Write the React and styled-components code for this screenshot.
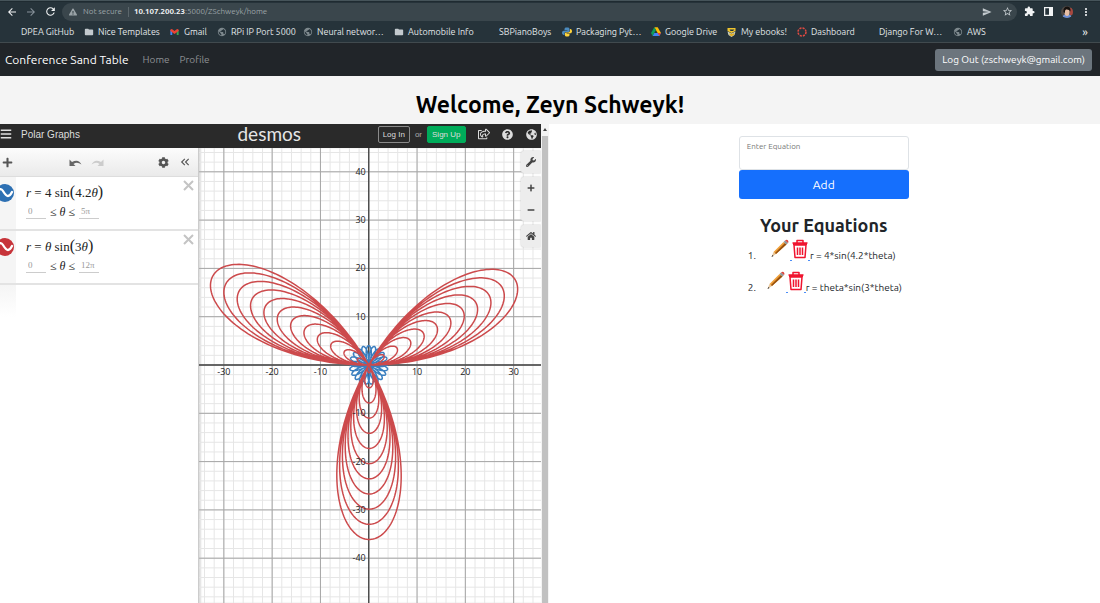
import React from "react";
import styled, { createGlobalStyle } from "styled-components";
import {
  FaPlus, FaMinus, FaCog, FaWrench, FaHome, FaQuestionCircle, FaBars, FaExclamationTriangle,
  FaRegShareSquare, FaGlobeAmericas,
} from "react-icons/fa";
import {
  MdArrowBack, MdArrowForward, MdRefresh, MdSend, MdStarBorder, MdExtension, MdFolder,
  MdMoreVert, MdPublic, MdKeyboardDoubleArrowLeft,
} from "react-icons/md";

const UI = `Ubuntu, "Noto Sans", "Open Sans", sans-serif`;
const HEADING = `Ubuntu, "Open Sans", "Noto Sans", sans-serif`;
const DESMOS = `"Liberation Sans", Arial, sans-serif`;
const MATH = `"Liberation Serif", "Times New Roman", serif`;

const Global = createGlobalStyle`
  * { box-sizing: border-box; }
  body { margin: 0; font-family: ${UI}; background: #fff; color: #212529; }
  button, input { font: inherit; margin: 0; }
  h1, h2, ol, form { margin: 0; padding: 0; }
`;

const Page = styled.div`
  display: flex;
  flex-direction: column;
  min-height: 100vh;
`;

/* Browser chrome */
const Chrome = styled.header`
  background: #26333a;
  border-top: 1px solid #46545a;
  border-bottom: 1px solid #414a4e;
  color: #e2e7e9;
`;
const TabStrip = styled.div`
  height: 1px;
  background: #1f2b31;
`;
const AddressRow = styled.div`
  display: flex;
  align-items: center;
  height: 19px;
  padding: 0 7px 0 5px;
  gap: 5px;
`;
const IconButton = styled.button`
  display: flex;
  align-items: center;
  justify-content: center;
  flex: none;
  width: 14px;
  height: 16px;
  padding: 0;
  border: 0;
  background: none;
  color: ${(p) => p.$color || "#f1f3f4"};
  font-size: 12px;
  line-height: 14px;
`;
const AddressBar = styled.div`
  display: flex;
  align-items: center;
  flex: 1;
  height: 18px;
  gap: 6px;
  padding: 0 3px 0 7px;
  border-radius: 9px;
  background: #3a464c;
  color: #9aa3a7;
  font-size: 8px;
`;
const Url = styled.span`
  flex: 1;
  padding-left: 5px;
  border-left: 1px solid #5b666b;
  line-height: 10px;
  b { color: #f1f3f4; font-weight: 600; }
`;
const Bookmarks = styled.nav`
  display: grid;
  grid-template-columns: 77px 86px 47px 86px 91px 91px 77px 89px 76px 70px 68px 88px 1fr 16px;
  align-items: center;
  height: 21px;
  padding: 0 6px 0 7px;
`;
const Bookmark = styled.a`
  display: flex;
  align-items: center;
  gap: 4px;
  min-width: 0;
  color: #e2e7e9;
  font-size: 9px;
  line-height: 12px;
  white-space: nowrap;
  text-decoration: none;
`;
const BookmarkIcon = styled.span`
  display: flex;
  flex: none;
  width: 10px;
  color: ${(p) => p.$color};
`;

/* Site navigation */
const Navbar = styled.nav`
  display: flex;
  align-items: center;
  height: 33px;
  padding: 0 8px 0 5px;
  background: #212529;
`;
const Brand = styled.a`
  color: #fff;
  font-size: 12px;
  line-height: 18px;
  margin-right: 9px;
  text-decoration: none;
`;
const NavLink = styled.a`
  color: #8f9295;
  font-size: 10px;
  line-height: 16px;
  padding: 0 5px;
  text-decoration: none;
`;
const LogOut = styled.button`
  margin-left: auto;
  height: 22px;
  padding: 0 7px;
  border: 0;
  border-radius: 3px;
  background: #6c757d;
  color: #fff;
  font-family: ${HEADING};
  font-size: 10px;
`;
const Welcome = styled.h1`
  padding: 13px 0 3px;
  background: #f4f4f4;
  color: #000;
  text-align: center;
  font-family: ${HEADING};
  font-size: 23px;
  line-height: 32px;
  font-weight: 600;
`;
const Columns = styled.main`
  display: grid;
  grid-template-columns: 1fr 1fr;
  flex: 1;
  padding-right: 3px;
`;

/* Embedded calculator */
const Frame = styled.section`
  display: grid;
  grid-template-columns: 1fr 8px;
  font-family: ${DESMOS};
`;
const Calculator = styled.div`
  display: flex;
  flex-direction: column;
  min-width: 0;
`;
const CalcHeader = styled.div`
  display: grid;
  grid-template-columns: 1fr auto 1fr;
  align-items: center;
  height: 24px;
  padding: 0 2px 4px 0;
  background: #2a2a2a;
  color: #ddd;
`;
const CalcTitle = styled.div`
  display: flex;
  align-items: center;
  gap: 9px;
  font-size: 10px;
`;
const Account = styled.div`
  display: flex;
  align-items: center;
  justify-content: flex-end;
  gap: 5px;
  color: #aaa;
  font-size: 8px;
`;
const AccountButton = styled.button`
  height: 17px;
  padding: 0 4px;
  border: 1px solid ${(p) => (p.$primary ? "#00ac5a" : "#8a8a8a")};
  border-radius: 2px;
  background: ${(p) => (p.$primary ? "#00ac5a" : "transparent")};
  color: #ddd;
  font-size: 8px;
`;
const HeaderIcons = styled.div`
  display: flex;
  gap: 10px;
  margin-left: 6px;
`;
const CalcBody = styled.div`
  display: grid;
  grid-template-columns: 199px 1fr;
  flex: 1;
`;
const Expressions = styled.div`
  display: flex;
  flex-direction: column;
  border-right: 1px solid #ccc;
`;
const ExprToolbar = styled.div`
  display: flex;
  align-items: center;
  height: 29px;
  padding: 0 6px 0 0;
  background: linear-gradient(#fcfcfc, #eaeaea);
  border-bottom: 1px solid #ddd;
`;
const Spacer = styled.span`
  flex: ${(p) => p.$grow};
`;
const ExprRow = styled.div`
  display: grid;
  grid-template-columns: 16px 1fr 17px;
  height: 54px;
  border-bottom: 2px solid #e3e3e3;
`;
const Gutter = styled.div`
  overflow: hidden;
  padding-top: 7px;
  background: #f5f5f5;
`;
const EmptyGutter = styled.div`
  width: 16px;
  height: 32px;
  background: linear-gradient(#f5f5f5, #fff);
`;
const Formula = styled.div`
  padding: 7px 0 0 10px;
  color: #222;
  font-family: ${MATH};
  font-size: 13px;
  line-height: 18px;
  white-space: nowrap;
`;
const Paren = styled.span`
  font-size: 16px;
  line-height: 16px;
`;
const Domain = styled.div`
  display: flex;
  align-items: center;
  gap: 4px;
  height: 19px;
  font-size: 12px;
`;
const Bound = styled.input`
  width: 20px;
  height: 15px;
  padding: 0 2px;
  border: 0;
  border-bottom: 1px solid #ccc;
  background: none;
  color: #999;
  font-size: 9px;
`;
const GraphPane = styled.div`
  position: relative;
  overflow: hidden;
  box-shadow: inset 2px 0 2px #ddd;
`;
const GraphSvg = styled.svg`
  position: absolute;
  inset: 0;
  width: 100%;
  height: 100%;
`;
const GraphTools = styled.div`
  position: absolute;
  top: 3px;
  right: 0;
  display: flex;
  flex-direction: column;
  gap: 4px;
`;
const ToolGroup = styled.div`
  background: #ededed;
  border-radius: 3px 0 0 3px;
  box-shadow: 0 0 2px #bbb;
`;
const Tool = styled.button`
  display: flex;
  align-items: center;
  justify-content: center;
  width: 20px;
  height: 22px;
  padding: 0;
  border: 0;
  background: none;
  color: #444;
`;
const ScrollTrack = styled.div`
  padding: 4px 1px 0;
  background: #f4f4f4;
`;
const ScrollThumb = styled.div`
  width: 6px;
  height: calc(100% - 8px);
  margin-top: 5px;
  background: #c1c1c1;
`;
const ScrollArrow = styled.div`
  width: 4px;
  margin: 0 auto;
  border: 2px solid transparent;
  border-top: 0;
  border-bottom: 3px solid #444;
`;

/* Equation form and list */
const Side = styled.section`
  padding: 12px 0 0 2px;
`;
const EquationForm = styled.form`
  width: 170px;
  margin: 0 auto;
`;
const Field = styled.label`
  display: block;
  height: 34px;
  padding: 4px 7px;
  border: 1px solid #dee2e6;
  border-radius: 3px;
  color: #777;
  font-size: 8px;
  line-height: 12px;
`;
const FieldInput = styled.input`
  display: block;
  width: 100%;
  height: 12px;
  padding: 0;
  border: 0;
  outline: 0;
  background: none;
`;
const AddButton = styled.button`
  display: block;
  width: 100%;
  height: 29px;
  border: 0;
  border-radius: 3px;
  background: #156ffd;
  color: #fff;
  font-size: 12px;
`;
const SideTitle = styled.h2`
  margin-top: 14px;
  text-align: center;
  font-family: ${HEADING};
  font-size: 18px;
  line-height: 24px;
  font-weight: 600;
`;
const EquationList = styled.ol`
  width: 152px;
  margin: 0 auto;
  list-style: none;
`;
const EquationItem = styled.li`
  display: grid;
  grid-template-columns: 18px 1fr;
  align-items: end;
  height: 26px;
  margin-bottom: 6px;
  font-family: ${HEADING};
  font-size: 10px;
  line-height: 14px;
`;
const EquationText = styled.span`
  display: flex;
  align-items: flex-end;
  justify-content: center;
  white-space: nowrap;
`;
const Action = styled.button`
  display: flex;
  align-items: flex-start;
  height: 24px;
  padding: 0;
  border: 0;
  background: none;
`;
const Underscore = styled.i`
  width: 2px;
  height: 1px;
  margin-bottom: 2px;
  background: #4b8df8;
`;

const GmailLogo = () => (
  <svg width="9" height="8" viewBox="0 0 24 18">
    <path d="M1 17V3l5 4v10z" fill="#4285f4" />
    <path d="M23 17V3l-5 4v10z" fill="#34a853" />
    <path d="M1 3q3-4 6-1l5 4 5-4q3-3 6 1v3l-11 8L1 6z" fill="#ea4335" />
  </svg>
);
const DriveLogo = () => (
  <svg width="10" height="9" viewBox="0 0 24 21">
    <path d="M8 0h8l8 14h-8z" fill="#fbbc04" />
    <path d="M8 0l4 7-8 14-4-7z" fill="#0f9d58" />
    <path d="M8 14h16l-4 7H4z" fill="#4285f4" />
    <path d="M16 14h8l-4 7z" fill="#ea4335" />
  </svg>
);
const PythonLogo = () => (
  <svg width="10" height="10" viewBox="0 0 24 24">
    <path d="M12 1c-4 0-6 1-6 4v3h7v1H4c-3 0-4 3-4 5s1 5 4 5h2v-4c0-2 2-3 4-3h5c2 0 3-1 3-3V5c0-3-2-4-6-4z" fill="#4b8bbe" />
    <path d="M12 23c4 0 6-1 6-4v-3h-7v-1h9c3 0 4-3 4-5s-1-5-4-5h-1v4c0 3-2 4-4 4h-5c-2 0-3 1-3 3v3c0 3 2 4 5 4z" fill="#ffd43b" />
  </svg>
);
const EbooksLogo = () => (
  <svg width="9" height="10" viewBox="0 0 18 20">
    <path d="M1 2h16v6L9 12 1 8z" fill="#f0c52e" />
    <path d="M5 5h10l-3 3H7z" fill="#20343d" />
    <path d="M1 9l8 4 8-4-2 7-6 4-6-4z" fill="#cfd8c8" />
    <path d="M5 12l4 2 6-2-1 4-5 3-4-3z" fill="#e0ae24" />
  </svg>
);
const DashboardLogo = () => (
  <svg width="10" height="10" viewBox="0 0 20 20">
    <circle cx="10" cy="10" r="8" fill="none" stroke="#e04a42" strokeWidth="3" strokeDasharray="4.2 2.1" />
  </svg>
);
const Avatar = () => (
  <svg width="12" height="12" viewBox="0 0 24 24">
    <clipPath id="face"><circle cx="12" cy="12" r="12" /></clipPath>
    <g clipPath="url(#face)">
      <path d="M0 0h24v24H0z" fill="#4f4844" />
      <path d="M18 4h6v14h-6z" fill="#a8483f" />
      <path d="M2 24q2-8 10-8t10 8z" fill="#6d8fd6" />
      <ellipse cx="12" cy="12" rx="5" ry="8" fill="#e8bfa6" />
      <path d="M5 12Q4 1 13 1q7 1 6 10-3-5-9-4-3 1-2 7z" fill="#15110f" />
    </g>
  </svg>
);
const SidePanelIcon = () => (
  <svg width="9" height="9" viewBox="0 0 18 18">
    <path d="M1 1h16v16H1z" fill="none" stroke="#f1f3f4" strokeWidth="3" />
    <path d="M10 1h7v16h-7z" fill="#f1f3f4" />
  </svg>
);
const DesmosLogo = styled.span`
  color: #e5e5e5;
  font-family: Lato, sans-serif;
  font-size: 19px;
  line-height: 18px;
`;
const UndoIcon = ({ flip, color }) => (
  <svg width="13" height="9" viewBox="0 0 26 18">
    <g transform={flip ? "translate(26 0) scale(-1 1)" : undefined}>
      <path d="M1 3v13h12l-4-4q7-5 16 1Q19 1 6 8z" fill={color} />
    </g>
  </svg>
);
const CloseIcon = () => (
  <svg width="11" height="11" viewBox="0 0 22 22">
    <path d="M2 2l18 18M20 2L2 20" stroke="#c4c4c4" strokeWidth="4" />
  </svg>
);
const CurveBadge = ({ color }) => (
  <svg width="16" height="18" viewBox="0 0 16 18">
    <circle cx="5" cy="9" r="9" fill={color} />
    <path d="M-3 10Q0 2 3 7T8 12Q10 12 12 8" fill="none" stroke="#fff" strokeWidth="2.3" strokeLinecap="round" />
  </svg>
);
const Pencil = () => (
  <svg width="20" height="20" viewBox="0 0 40 40">
    <path d="M3 36l4-10 5 4z" fill="#e9c79b" />
    <path d="M3 36l2-4 2 2z" fill="#222" />
    <path d="M7 26L27 6l6 5-21 19z" fill="#f0a03a" />
    <path d="M10 28L30 8l3 3-21 19z" fill="#95500f" />
    <path d="M27 6l3-3 6 5-3 3z" fill="#8f989c" />
    <path d="M30 3q4-3 6 0t0 5z" fill="#d9443c" />
  </svg>
);
const Trash = () => (
  <svg width="16" height="20" viewBox="0 0 32 40" fill="none" stroke="#f0142f" strokeWidth="3">
    <path d="M1 8h30M10 8V3h12v5M4 12h24l-2 25H6z" strokeLinejoin="round" />
    <path d="M2 10h28" strokeWidth="4" />
    <path d="M11 17v15M16 17v15M21 17v15" />
  </svg>
);

const UNIT = 4.83;

function polarPath(radius, end, steps) {
  let d = "";
  for (let i = 0; i <= steps; i++) {
    const t = (end * i) / steps;
    const r = radius(t) * UNIT;
    d += `${i ? "L" : "M"}${(r * Math.cos(t)).toFixed(2)} ${(-r * Math.sin(t)).toFixed(2)}`;
  }
  return d;
}

const rosePath = polarPath((t) => 4 * Math.sin(4.2 * t), 5 * Math.PI, 1600);
const spiralPath = polarPath((t) => t * Math.sin(3 * t), 12 * Math.PI, 4000);

function Graph() {
  const minor = [];
  for (let i = -60; i <= 60; i++) minor.push(i * 2);
  const major = minor.filter((v) => v % 10 === 0);
  const lines = (values, stroke) =>
    values.map((v) => (
      <path key={v} d={`M${v * UNIT} -600V600M-600 ${v * UNIT}H600`} stroke={stroke} />
    ));
  return (
    <GraphSvg viewBox="-170 -217 342 455" preserveAspectRatio="xMidYMin slice">
      {lines(minor, "#e6e6e6")}
      {lines(major, "#a6a6a6")}
      <path d="M0 -600V600M-600 0H600" stroke="#444" strokeWidth="1.3" />
      <path d={rosePath} fill="none" stroke="#3a7fc0" strokeWidth="1.5" />
      <path d={spiralPath} fill="none" stroke="#cc4a4c" strokeWidth="1.5" />
      <g fill="#222" fontSize="9" fontFamily={`"Open Sans", sans-serif`}>
        {[-30, -20, -10, 10, 20, 30].map((v) => (
          <text key={v} x={v * UNIT} y="10" textAnchor="middle">{v}</text>
        ))}
        {[-40, -30, -20, -10, 10, 20, 30, 40].map((v) => (
          <text key={v} x="-3" y={-v * UNIT + 3} textAnchor="end">{v}</text>
        ))}
      </g>
    </GraphSvg>
  );
}

const bookmarks = [
  ["DPEA GitHub"],
  ["Nice Templates", <MdFolder size={10} />, "#c3cace"],
  ["Gmail", <GmailLogo />],
  ["RPi IP Port 5000", <MdPublic size={10} />, "#7d888d"],
  ["Neural networ…", <MdPublic size={10} />, "#7d888d"],
  ["Automobile Info", <MdFolder size={10} />, "#c3cace"],
  ["SBPianoBoys"],
  ["Packaging Pyt…", <PythonLogo />],
  ["Google Drive", <DriveLogo />],
  ["My ebooks!", <EbooksLogo />],
  ["Dashboard", <DashboardLogo />],
  ["Django For W…"],
  ["AWS", <MdPublic size={10} />, "#7d888d"],
];

const expressions = [
  { color: "#2d70b3", body: <><i>r</i> = 4 sin<Paren>(</Paren>4.2<i>θ</i><Paren>)</Paren></>, max: "5π" },
  { color: "#c7343a", body: <><i>r</i> = <i>θ</i> sin<Paren>(</Paren>3<i>θ</i><Paren>)</Paren></>, max: "12π" },
];

const equations = ["r = 4*sin(4.2*theta)", "r = theta*sin(3*theta)"];

export default function App() {
  return (
    <Page>
      <Global />
      <Chrome>
        <TabStrip />
        <AddressRow>
          <IconButton aria-label="Back"><MdArrowBack size={12} /></IconButton>
          <IconButton aria-label="Forward" $color="#87929a"><MdArrowForward size={12} /></IconButton>
          <IconButton aria-label="Reload"><MdRefresh size={13} /></IconButton>
          <AddressBar>
            <FaExclamationTriangle size={8} />
            <span>Not secure</span>
            <Url><b>10.107.200.23</b>:5000/ZSchweyk/home</Url>
            <IconButton aria-label="Share" $color="#c3cace"><MdSend size={10} /></IconButton>
            <IconButton aria-label="Bookmark" $color="#c3cace"><MdStarBorder size={11} /></IconButton>
          </AddressBar>
          <IconButton aria-label="Extensions"><MdExtension size={11} /></IconButton>
          <IconButton aria-label="Side panel"><SidePanelIcon /></IconButton>
          <IconButton aria-label="Account"><Avatar /></IconButton>
          <IconButton aria-label="Menu"><MdMoreVert size={12} /></IconButton>
        </AddressRow>
        <Bookmarks>
          {bookmarks.map(([name, icon, color]) => (
            <Bookmark href="#" key={name}>
              <BookmarkIcon $color={color}>{icon}</BookmarkIcon>
              {name}
            </Bookmark>
          ))}
          <IconButton aria-label="More bookmarks">»</IconButton>
        </Bookmarks>
      </Chrome>

      <Navbar>
        <Brand href="#">Conference Sand Table</Brand>
        <NavLink href="#">Home</NavLink>
        <NavLink href="#">Profile</NavLink>
        <LogOut>Log Out (zschweyk@gmail.com)</LogOut>
      </Navbar>
      <Welcome>Welcome, Zeyn Schweyk!</Welcome>

      <Columns>
        <Frame>
          <Calculator>
            <CalcHeader>
              <CalcTitle><FaBars size={12} />Polar Graphs</CalcTitle>
              <DesmosLogo>desmos</DesmosLogo>
              <Account>
                <AccountButton>Log In</AccountButton>
                or
                <AccountButton $primary>Sign Up</AccountButton>
                <HeaderIcons>
                  <IconButton aria-label="Share graph" $color="#ddd"><FaRegShareSquare size={12} /></IconButton>
                  <IconButton aria-label="Help" $color="#ddd"><FaQuestionCircle size={11} /></IconButton>
                  <IconButton aria-label="Language" $color="#ddd"><FaGlobeAmericas size={11} /></IconButton>
                </HeaderIcons>
              </Account>
            </CalcHeader>
            <CalcBody>
              <Expressions>
                <ExprToolbar>
                  <IconButton aria-label="Add item" $color="#555"><FaPlus size={11} /></IconButton>
                  <Spacer $grow={54} />
                  <IconButton aria-label="Undo"><UndoIcon color="#666" /></IconButton>
                  <Spacer $grow={8} />
                  <IconButton aria-label="Redo"><UndoIcon flip color="#ccc" /></IconButton>
                  <Spacer $grow={52} />
                  <IconButton aria-label="Edit list" $color="#555"><FaCog size={11} /></IconButton>
                  <Spacer $grow={8} />
                  <IconButton aria-label="Hide list" $color="#555"><MdKeyboardDoubleArrowLeft size={18} /></IconButton>
                </ExprToolbar>
                {expressions.map((e) => (
                  <ExprRow key={e.max}>
                    <Gutter><CurveBadge color={e.color} /></Gutter>
                    <Formula>
                      {e.body}
                      <Domain>
                        <Bound aria-label="Minimum" defaultValue="0" />
                        <span>≤ <i>θ</i> ≤</span>
                        <Bound aria-label="Maximum" defaultValue={e.max} />
                      </Domain>
                    </Formula>
                    <IconButton aria-label="Delete"><CloseIcon /></IconButton>
                  </ExprRow>
                ))}
                <EmptyGutter />
              </Expressions>
              <GraphPane>
                <Graph />
                <GraphTools>
                  <ToolGroup><Tool aria-label="Settings"><FaWrench size={10} /></Tool></ToolGroup>
                  <ToolGroup>
                    <Tool aria-label="Zoom in"><FaPlus size={8} /></Tool>
                    <Tool aria-label="Zoom out"><FaMinus size={8} /></Tool>
                  </ToolGroup>
                  <ToolGroup><Tool aria-label="Default view"><FaHome size={10} /></Tool></ToolGroup>
                </GraphTools>
              </GraphPane>
            </CalcBody>
          </Calculator>
          <ScrollTrack><ScrollArrow /><ScrollThumb /></ScrollTrack>
        </Frame>

        <Side>
          <EquationForm>
            <Field>
              Enter Equation
              <FieldInput type="text" />
            </Field>
            <AddButton type="button">Add</AddButton>
          </EquationForm>
          <SideTitle>Your Equations</SideTitle>
          <EquationList>
            {equations.map((text, i) => (
              <EquationItem key={text}>
                <span>{i + 1}.</span>
                <EquationText>
                  <Action aria-label="Edit"><Pencil /></Action>
                  <Underscore />
                  <Action aria-label="Delete"><Trash /></Action>
                  <Underscore />
                  {text}
                </EquationText>
              </EquationItem>
            ))}
          </EquationList>
        </Side>
      </Columns>
    </Page>
  );
}
